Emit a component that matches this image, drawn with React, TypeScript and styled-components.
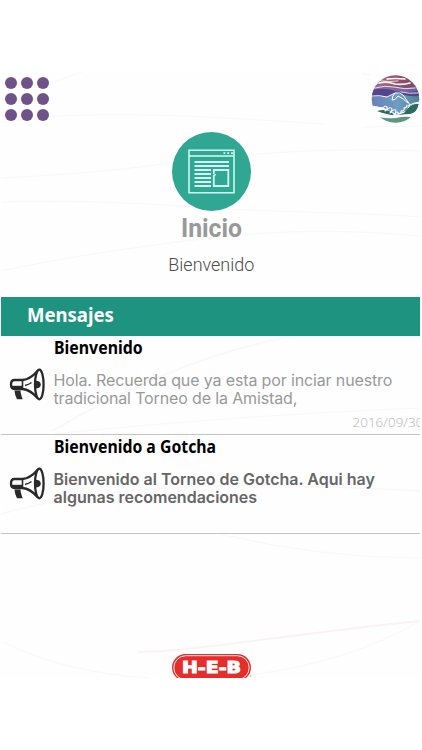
import React from "react";
import styled, { createGlobalStyle } from "styled-components";

const GlobalStyle = createGlobalStyle`
  * { box-sizing: border-box; }
  body { margin: 0; background: #fff; overflow: hidden; }
`;

const Page = styled.div`
  width: 422px;
  height: 750px;
  padding: 72px 2px 72px 1px;
  background: #fff;
`;

const Screen = styled.main`
  position: relative;
  isolation: isolate;
  display: flex;
  flex-direction: column;
  height: 606px;
  overflow: hidden;
  background: #fefefe;
  font-family: "Roboto", "Liberation Sans", sans-serif;
`;

const Curves = styled.svg`
  position: absolute;
  inset: 0;
  z-index: -1;
  width: 419px;
  height: 606px;
  fill: none;
`;

const TopBar = styled.header`
  display: flex;
  justify-content: space-between;
  height: 60px;
  padding: 3px 0 0 4px;
`;

const MenuButton = styled.button`
  display: grid;
  grid-template-columns: repeat(3, 12px);
  grid-auto-rows: 12px;
  gap: 4px;
  height: 44px;
  margin-top: 2px;
  padding: 0;
  border: 0;
  background: none;
`;

const Dot = styled.span`
  border-radius: 50%;
  background: #6f5288;
`;

const Emblem = styled.svg`
  width: 50px;
  height: 50px;
  margin-top: -1px;
`;

const Hero = styled.section`
  display: flex;
  flex-direction: column;
  align-items: center;
  height: 164.5px;
  padding-left: 2px;
`;

const HeroIcon = styled.svg`
  flex: none;
  width: 79px;
  height: 79px;
`;

const Title = styled.h1<{ $stretch: number }>`
  margin: 0;
  font-size: 25.5px;
  line-height: 34px;
  font-weight: 700;
  color: #999;
  transform: scaleX(${(p) => p.$stretch});
`;

const Subtitle = styled.p<{ $stretch: number }>`
  margin: 4px 0 0;
  font-size: 18.5px;
  line-height: 32px;
  font-weight: 300;
  color: #4c4c4c;
  transform: scaleX(${(p) => p.$stretch});
`;

const SectionHeading = styled.h2`
  flex: none;
  height: 39.5px;
  margin: 0;
  padding-left: 26px;
  background: #1e9480;
  color: #fff;
  font: 700 19.5px/35px "Noto Sans", sans-serif;
`;

const Squeeze = styled.span<{ $stretch: number }>`
  display: inline-block;
  transform-origin: left;
  transform: scaleX(${(p) => p.$stretch});
`;

const Message = styled.article`
  display: grid;
  grid-template-columns: 52.5px 1fr;
  flex: none;
  height: 99px;
  border-bottom: 1.5px solid #c4c4c4;
`;

const Horn = styled.svg`
  width: 36px;
  height: 35px;
  margin: 32px 0 0 8px;
`;

const MessageBody = styled.div`
  display: flex;
  flex-direction: column;
  white-space: nowrap;
`;

const MessageTitle = styled.h3`
  margin: 0;
  color: #000;
  font: 700 18px/23px "Noto Sans", sans-serif;
`;

const MessageText = styled.p<{ $unread?: boolean }>`
  margin: 12px 0 0;
  font-family: "Inter", sans-serif;
  font-size: 16px;
  line-height: 18px;
  font-weight: ${(p) => (p.$unread ? 600 : 400)};
  letter-spacing: ${(p) => (p.$unread ? "0px" : "-0.14px")};
  color: ${(p) => (p.$unread ? "#666" : "#999")};
`;

const MessageDate = styled.time`
  margin: 7px 0 0 299px;
  font: 300 13.5px/16px "Open Sans", sans-serif;
  color: #b4b4b4;
`;

const Footer = styled.footer`
  display: flex;
  justify-content: center;
  margin-top: auto;
  height: 24px;
`;

const Brand = styled.svg`
  width: 80px;
  height: 28px;
  margin-left: 2px;
`;

function Background() {
  return (
    <Curves viewBox="1 72 419 606" aria-hidden="true">
      <g stroke="#fbf6f7" strokeWidth="1">
        <path d="M1 178Q90 174 163 164C260 151 340 148 420 151" />
        <path d="M1 202C90 199 180 206 230 209S370 213 420 217" />
        <path d="M1 271Q90 252 210 238C290 229 350 230 420 236" />
        <path d="M52 431C140 380 220 348 296 336" strokeWidth="1.6" />
        <path d="M1 514C120 480 260 482 420 491" strokeWidth="1.5" />
        <path d="M138 652C190 652 290 634 420 621" stroke="#faf2f4" strokeWidth="1.8" />
      </g>
      <g stroke="#f8f8f8">
        <path d="M1 123C80 108 200 116 325 124" />
        <path d="M50 83L82 72M362 73l8 2M362 127l58-1" />
        <path d="M52 434Q240 415 420 408" />
        <path d="M220 534Q320 558 420 558" />
        <path d="M1 641Q65 673 150 678M250 675Q350 662 420 621" />
      </g>
    </Curves>
  );
}

function HandshakeEmblem() {
  return (
    <Emblem viewBox="0 0 50 50">
      <defs>
        <clipPath id="globe"><circle cx="25.5" cy="25" r="23.8" /></clipPath>
        <linearGradient id="sunset" x1="0" x2="1">
          <stop stopColor="#c47584" /><stop offset=".5" stopColor="#9c5068" /><stop offset="1" stopColor="#784464" />
        </linearGradient>
        <linearGradient id="dusk" x1="0" x2="1">
          <stop stopColor="#9a6c9b" /><stop offset="1" stopColor="#68639d" />
        </linearGradient>
        <linearGradient id="water" x1="0" x2="1">
          <stop stopColor="#667fb8" /><stop offset=".55" stopColor="#6e9dc4" /><stop offset="1" stopColor="#4b8494" />
        </linearGradient>
      </defs>
      <g clipPath="url(#globe)">
        <path fill="#fff" d="M0 0h50v50H0z" />
        <path fill="url(#sunset)" d="M0 0h50v14H0z" />
        <path fill="url(#dusk)" d="M0 11q12-2 23 1 14 3 27 0v9H0z" />
        <path fill="#52458c" d="M2 16q12-3 23 1 12 3 24-1v7H1z" />
        <path fill="url(#water)" d="M0 23q10-1 18 0l8-4 8 2q8 2 16 1v6q-7 1-11 5l-3 4-10 3-14-7Q6 34 0 32z" />
        <path fill="#2d6b60" d="M7 37q7-2 12 0l6 4 9-2 5-6q6-4 10-3-1 8-9 10-5 0-11 1-10 1-22-4z" />
        <path fill="#5f967f" d="M9 43q9 2 17 1 8-2 15-1-5 8-15 8-11 0-17-8z" />
        <g fill="none" stroke="#fff" strokeLinecap="round" strokeLinejoin="round">
          <path strokeWidth="1.6" d="M17 5q8-1 18 0M9 9q8-2 16 1 8 1 15-1" />
          <path strokeWidth=".8" d="M5 14q10-3 19-1 11 3 21 1M31 18q8 2 17 1M11 7q9 1 17 0" />
          <path strokeWidth="1" d="M2 22q8-1 15 1l8-4q5-1 8 2l5 7q3 3 0 6M25 19q-3 3-3 7 3 1 6-4 5 2 10 7" />
          <path strokeWidth="1.1" d="M13 34q2-3 4-1 1 2-2 4m2-1q3-4 5-1 0 3-2 4m2-2q4-3 4 1l-1 2m2-2q3 1 0 4-3 0-3-2m4 0q4 0 3-3 4 0 3-3 3 0 3-3" />
          <path strokeWidth="1" d="M1 32q7 0 12 3M38 32q4-3 11-4" />
        </g>
      </g>
    </Emblem>
  );
}

function NewsIcon() {
  return (
    <HeroIcon viewBox="0 0 79 79">
      <circle cx="39.5" cy="39.5" r="39.5" fill="#2fa792" />
      <g fill="none" stroke="#d2fff4" strokeWidth="1.5">
        <path d="M17 18.2h45v42.6H17zM17 24h45" />
        <path strokeWidth="2" d="M22.5 30H57M22.5 34H57M22.5 38H39M22.5 42H39M22.5 46H39M22.5 50H39M22.5 54H39" />
        <path strokeWidth="1.8" d="M41.8 42V38H56.3v16H41.8V43.5l2-1" />
        <path strokeWidth="1.8" strokeDasharray="1.8 2" d="M51.5 21.2h10" />
      </g>
    </HeroIcon>
  );
}

function MegaphoneIcon() {
  return (
    <Horn viewBox="0 0 36 35" fill="none" stroke="#292929">
      <ellipse cx="30.3" cy="16.5" rx="4.3" ry="14.8" strokeWidth="2.3" />
      <path d="M28.5 3Q21 11.5 13.5 12H5.5Q2 12 2 16.5T5.5 21h8Q21 21.5 28.5 30" strokeWidth="2.4" />
      <path d="M3 17.8h11v3.2H3z" fill="#292929" stroke="none" />
      <path d="M13.5 12v9" strokeWidth="1.6" />
      <path d="M5.5 22.5h6q0 3 2.2 8.8H8q-2.2-4-2.5-8.8z" fill="#292929" stroke="none" />
      <path d="M16 17.5q4-1 6.5-3" strokeWidth="1.5" />
      <path d="M26 12.7q5.8-.2 5.8 3.8t-5.8 4z" fill="#292929" stroke="none" />
    </Horn>
  );
}

export default function App() {
  return (
    <>
      <GlobalStyle />
      <Page>
        <Screen>
          <Background />
          <TopBar>
            <MenuButton aria-label="Menú">
              {Array.from({ length: 9 }, (_, i) => <Dot key={i} />)}
            </MenuButton>
            <HandshakeEmblem />
          </TopBar>
          <Hero>
            <NewsIcon />
            <Title $stretch={0.97}>Inicio</Title>
            <Subtitle $stretch={0.97}>Bienvenido</Subtitle>
          </Hero>
          <SectionHeading><Squeeze $stretch={0.95}>Mensajes</Squeeze></SectionHeading>
          <Message>
            <MegaphoneIcon />
            <MessageBody>
              <MessageTitle><Squeeze $stretch={0.882}>Bienvenido</Squeeze></MessageTitle>
              <MessageText>Hola. Recuerda que ya esta por inciar nuestro<br />tradicional Torneo de la Amistad,</MessageText>
              <MessageDate>2016/09/30</MessageDate>
            </MessageBody>
          </Message>
          <Message>
            <MegaphoneIcon />
            <MessageBody>
              <MessageTitle><Squeeze $stretch={0.878}>Bienvenido a Gotcha</Squeeze></MessageTitle>
              <MessageText $unread>Bienvenido al Torneo de Gotcha. Aqui hay<br />algunas recomendaciones</MessageText>
            </MessageBody>
          </Message>
          <Footer>
            <Brand viewBox="0 0 80 28">
              <rect x="0" y="0" width="79" height="27" rx="13.5" fill="#e52d2b" />
              <rect x="1.8" y="1.7" width="75.4" height="24" rx="12" fill="none" stroke="#fff" strokeWidth=".9" />
              <text x="10" y="19" textLength="59" lengthAdjust="spacingAndGlyphs" fill="#fff" stroke="#fff" strokeWidth="1" fontFamily="DejaVu Sans" fontWeight="700" fontSize="15">H-E-B</text>
              <circle cx="78.5" cy="22" r=".7" fill="#e77" />
            </Brand>
          </Footer>
        </Screen>
      </Page>
    </>
  );
}
